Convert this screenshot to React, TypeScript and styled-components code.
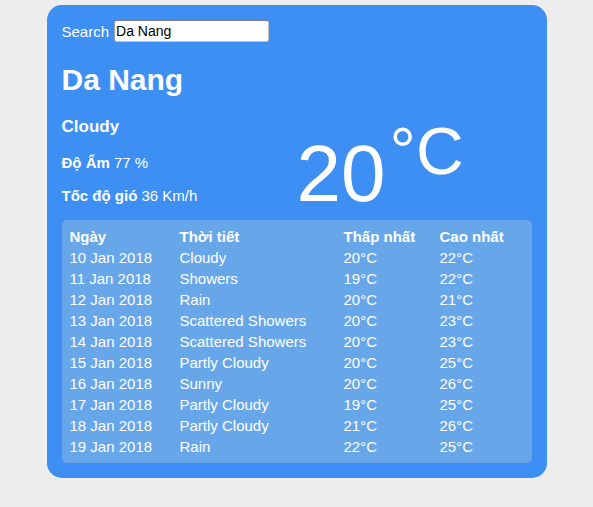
import React, { useState } from "react";
import styled, { createGlobalStyle } from "styled-components";

const GlobalStyle = createGlobalStyle`
  html, body {
    margin: 0;
    padding: 0;
    background: #ededed;
    font-family: "Liberation Sans", Arial, sans-serif;
  }
`;

const Card = styled.div`
  width: 500px;
  box-sizing: border-box;
  margin: 5px auto 0;
  padding: 15px 15px 15px;
  background: #3d8ff3;
  border-radius: 15px;
  color: #fff;
`;

const SearchRow = styled.label`
  display: flex;
  align-items: center;
  gap: 5px;
  font-size: 15px;
  line-height: 17px;
`;

const SearchInput = styled.input`
  width: 155px;
  height: 22px;
  box-sizing: border-box;
  margin: 0;
  padding: 0 1px;
  font-family: "Liberation Sans", Arial, sans-serif;
  font-size: 14px;
  color: #000;
  background: #fff;
  border: 1px solid #c4c4c4;
  border-top-color: #7d7d7d;
  border-left-color: #9a9a9a;
  border-radius: 3px;
  outline: none;
`;

const City = styled.h1`
  margin: 21px 0 0;
  font-size: 30px;
  line-height: 34px;
  font-weight: bold;
`;

const Summary = styled.div`
  display: flex;
  align-items: flex-end;
  margin-top: 20px;
`;

const Half = styled.div`
  flex: 1 1 0;
  display: flex;
  flex-direction: column;
`;

const Condition = styled.div`
  font-size: 17px;
  line-height: 19px;
  font-weight: bold;
  margin-bottom: 18px;
`;

const Stat = styled.div<{ $gap?: number }>`
  font-size: 15px;
  line-height: 17px;
  margin-bottom: ${(p) => p.$gap ?? 0}px;

  b {
    font-weight: bold;
  }
`;

const Temp = styled.div`
  font-size: 80px;
  line-height: 60px;
  white-space: nowrap;
`;

const Unit = styled.span`
  font-size: 66px;
  line-height: 1;
  vertical-align: 27px;
  margin-left: 4px;
`;

const Panel = styled.div`
  margin-top: 16px;
  padding: 6px;
  background: #68a6ea;
  border-radius: 5px;
`;

const Table = styled.table`
  width: 100%;
  table-layout: fixed;
  border-collapse: collapse;
  font-size: 15px;
  line-height: 17px;
  color: #fff;
`;

const Head = styled.th`
  text-align: left;
  font-weight: bold;
  padding: 2px;
`;

const Cell = styled.td`
  padding: 2px;
  white-space: nowrap;
`;

const forecast = [
  ["10 Jan 2018", "Cloudy", 20, 22],
  ["11 Jan 2018", "Showers", 19, 22],
  ["12 Jan 2018", "Rain", 20, 21],
  ["13 Jan 2018", "Scattered Showers", 20, 23],
  ["14 Jan 2018", "Scattered Showers", 20, 23],
  ["15 Jan 2018", "Partly Cloudy", 20, 25],
  ["16 Jan 2018", "Sunny", 20, 26],
  ["17 Jan 2018", "Partly Cloudy", 19, 25],
  ["18 Jan 2018", "Partly Cloudy", 21, 26],
  ["19 Jan 2018", "Rain", 22, 25],
];

export default function App() {
  const [city, setCity] = useState("Da Nang");

  return (
    <>
      <GlobalStyle />
      <Card>
        <SearchRow>
          Search
          <SearchInput value={city} onChange={(e) => setCity(e.target.value)} />
        </SearchRow>
        <City>Da Nang</City>
        <Summary>
          <Half>
            <Condition>Cloudy</Condition>
            <Stat $gap={16}>
              <b>Độ Ẩm</b> 77 %
            </Stat>
            <Stat>
              <b>Tốc độ gió</b> 36 Km/h
            </Stat>
          </Half>
          <Half>
            <Temp>
              20<Unit>°C</Unit>
            </Temp>
          </Half>
        </Summary>
        <Panel>
          <Table>
            <colgroup>
              <col style={{ width: 110 }} />
              <col style={{ width: 164 }} />
              <col style={{ width: 96 }} />
              <col />
            </colgroup>
            <thead>
              <tr>
                <Head>Ngày</Head>
                <Head>Thời tiết</Head>
                <Head>Thấp nhất</Head>
                <Head>Cao nhất</Head>
              </tr>
            </thead>
            <tbody>
              {forecast.map(([day, text, low, high]) => (
                <tr key={day as string}>
                  <Cell>{day}</Cell>
                  <Cell>{text}</Cell>
                  <Cell>{low}°C</Cell>
                  <Cell>{high}°C</Cell>
                </tr>
              ))}
            </tbody>
          </Table>
        </Panel>
      </Card>
    </>
  );
}
